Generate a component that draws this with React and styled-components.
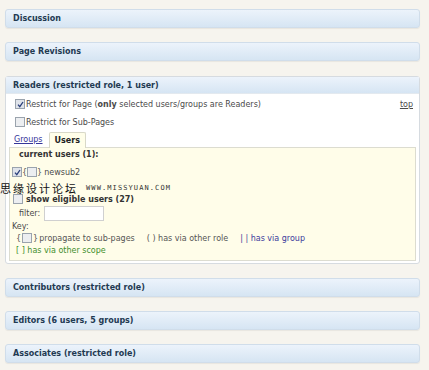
import React from 'react'
import styled, { createGlobalStyle } from 'styled-components'

const Global = createGlobalStyle`
	html, body {
		margin: 0;
		padding: 0;
		background: #f6f4ee;
	}
	body {
		font-family: "DejaVu Sans", Verdana, sans-serif;
		font-size: 8px;
		color: #4a4a4a;
	}
`

function Check({ checked }) {
	return (
		<Box checked={checked}>
			{checked && (
				<svg width="7" height="7" viewBox="0 0 7 7">
					<path d="M1 3.6 L2.8 5.6 L6 1" stroke="#2b3f7a" strokeWidth="1.3" fill="none" />
				</svg>
			)}
		</Box>
	)
}

function App() {
	return (
		<Page>
			<Global />
			<Bar><BarTitle>Discussion</BarTitle></Bar>
			<Bar><BarTitle>Page Revisions</BarTitle></Bar>
			<Panel>
				<PanelHead><BarTitle>Readers (restricted role, 1 user)</BarTitle></PanelHead>
				<PanelBody>
					<OptionRow>
						<Check checked />
						<span>Restrict for Page (<b>only</b> selected users/groups are Readers)</span>
						<TopLink>top</TopLink>
					</OptionRow>
					<OptionRow>
						<Check />
						<span>Restrict for Sub-Pages</span>
					</OptionRow>
					<Tabs>
						<TabLink>Groups</TabLink>
						<Tab>Users</Tab>
					</Tabs>
					<UserBox>
						<Heading>current users (1):</Heading>
						<UserRow>
							<Check checked />
							<Brace>{'{'}</Brace><Check /><Brace>{'}'}</Brace>
							<UserName>newsub2</UserName>
						</UserRow>
						<EligibleRow>
							<Check />
							<EligibleLabel>show eligible users (27)</EligibleLabel>
						</EligibleRow>
						<FilterRow>
							<span>filter:</span>
							<FilterInput />
						</FilterRow>
						<KeyTitle>Key:</KeyTitle>
						<KeyRow>
							<KeyItem><Brace>{'{'}</Brace><Check /><Brace>{'}'}</Brace> propagate to sub-pages</KeyItem>
							<KeyItem>( ) has via other role</KeyItem>
							<KeyItem color="#3b3b9c">| | has via group</KeyItem>
						</KeyRow>
						<KeyRow>
							<KeyItem color="#3f8f2e">[ ] has via other scope</KeyItem>
						</KeyRow>
					</UserBox>
				</PanelBody>
			</Panel>
			<Bar><BarTitle>Contributors (restricted role)</BarTitle></Bar>
			<Bar><BarTitle>Editors (6 users, 5 groups)</BarTitle></Bar>
			<Bar><BarTitle>Associates (restricted role)</BarTitle></Bar>
			<Watermark>
				<Cjk>思缘设计论坛</Cjk>
				<Site>WWW.MISSYUAN.COM</Site>
			</Watermark>
		</Page>
	)
}

const Page = styled.div`
	position: relative;
	width: 415px;
	padding: 9px 9px 6px 5px;
	display: flex;
	flex-direction: column;
	gap: 14px;
	& > * {
		flex: none;
	}
`

const Bar = styled.div`
	height: 17px;
	display: flex;
	align-items: center;
	border: 1px solid #d0ddea;
	border-radius: 3px;
	background: linear-gradient(#ecf3fb, #d6e5f3);
	box-shadow: 0 1px 1px rgba(0, 0, 0, 0.06);
`

const BarTitle = styled.span`
	padding-left: 7px;
	font-size: 8px;
	font-weight: bold;
	color: #1f3a52;
`

const Panel = styled.div`
	height: 188px;
	margin-top: 1px;
	box-sizing: border-box;
	border: 1px solid #d6dbe0;
	border-radius: 3px;
	background: #fff;
	display: flex;
	flex-direction: column;
	& > * {
		flex: none;
	}
`

const PanelHead = styled.div`
	height: 16px;
	display: flex;
	align-items: center;
	background: linear-gradient(#ecf3fb, #d6e5f3);
	border-bottom: 1px solid #e3e9ef;
`

const PanelBody = styled.div`
	padding: 1px 3px 0 3px;
	display: flex;
	flex-direction: column;
	& > * {
		flex: none;
	}
`

const OptionRow = styled.div`
	height: 18px;
	display: flex;
	align-items: center;
	gap: 1px;
	padding-left: 6px;
`

const TopLink = styled.a`
	margin-left: auto;
	margin-right: 3px;
	color: #4a4a4a;
	text-decoration: underline;
`

const Box = styled.span`
	width: 8px;
	height: 8px;
	flex: none;
	display: inline-flex;
	align-items: center;
	justify-content: center;
	border: 1px solid #9aa3ad;
	background: ${p => (p.checked ? '#dfe3ea' : '#eceef1')};
`

const Tabs = styled.div`
	display: flex;
	align-items: flex-end;
	height: 16px;
	padding-left: 5px;
	gap: 6px;
`

const TabLink = styled.a`
	color: #35359a;
	text-decoration: underline;
	font-size: 8px;
	padding-bottom: 3px;
`

const Tab = styled.div`
	height: 15px;
	padding: 0 5px;
	display: flex;
	align-items: center;
	font-size: 8px;
	font-weight: bold;
	color: #222;
	background: #fffee9;
	border: 1px solid #d8d8c8;
	border-bottom: none;
	border-radius: 2px 2px 0 0;
	margin-bottom: -1px;
	position: relative;
`

const UserBox = styled.div`
	height: 114px;
	box-sizing: border-box;
	background: #fffde9;
	border: 1px solid #dcdcd0;
	padding: 0 6px 0 2px;
	display: flex;
	flex-direction: column;
	& > * {
		flex: none;
	}
`

const Heading = styled.div`
	font-weight: bold;
	font-size: 8px;
	color: #333;
	padding-left: 7px;
	height: 14px;
	line-height: 14px;
`

const UserRow = styled.div`
	display: flex;
	align-items: center;
	height: 12px;
	margin-top: 4px;
`

const UserName = styled.span`
	margin-left: 2px;
`

const Brace = styled.span`
	color: #555;
`

const EligibleRow = styled.div`
	display: flex;
	align-items: center;
	height: 14px;
	margin-top: 14px;
	padding-left: 1px;
`

const EligibleLabel = styled.span`
	padding-left: 3px;
	font-weight: bold;
	color: #333;
`

const FilterRow = styled.div`
	display: flex;
	align-items: center;
	gap: 4px;
	padding-left: 7px;
	height: 15px;
`

const FilterInput = styled.div`
	width: 58px;
	height: 13px;
	background: #fff;
	border: 1px solid #d0d0d0;
`

const KeyTitle = styled.div`
	height: 11px;
	line-height: 11px;
`

const KeyRow = styled.div`
	display: flex;
	align-items: center;
	height: 12px;
	padding-left: 4px;
`

const KeyItem = styled.span`
	display: inline-flex;
	align-items: center;
	gap: 1px;
	color: ${p => p.color || '#555'};
	margin-right: 12px;
`

const Watermark = styled.div`
	position: absolute;
	left: 0;
	top: 180px;
	display: flex;
	align-items: center;
	gap: 8px;
`

const Cjk = styled.span`
	font-family: "Noto Sans CJK SC", sans-serif;
	font-size: 11px;
	color: #111;
	letter-spacing: 2px;
`

const Site = styled.span`
	font-family: "DejaVu Sans Mono", monospace;
	font-size: 7px;
	color: #333;
	letter-spacing: 1.1px;
`

export default App
